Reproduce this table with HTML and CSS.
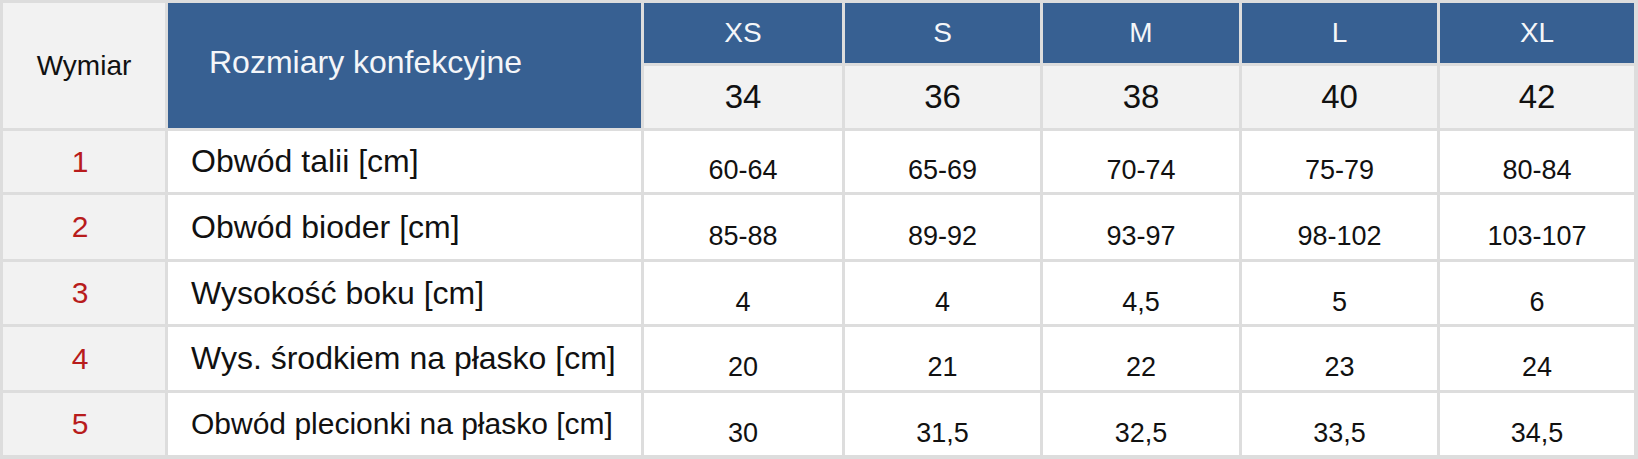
FILE: index.html
```html
<!DOCTYPE html>
<html lang="pl">
<head>
<meta charset="utf-8">
<title>Tabela rozmiarów</title>
<link rel="stylesheet" href="styles.css">
</head>
<body>
<div class="size-table">
  <div class="cell dim-head">Wymiar</div>
  <div class="cell blue title">Rozmiary konfekcyjne</div>
  <div class="cell blue size">XS</div>
  <div class="cell blue size">S</div>
  <div class="cell blue size">M</div>
  <div class="cell blue size">L</div>
  <div class="cell blue size">XL</div>
  <div class="cell eu">34</div>
  <div class="cell eu">36</div>
  <div class="cell eu">38</div>
  <div class="cell eu">40</div>
  <div class="cell eu">42</div>

  <div class="cell num">1</div>
  <div class="cell label">Obwód talii [cm]</div>
  <div class="cell val">60-64</div>
  <div class="cell val">65-69</div>
  <div class="cell val">70-74</div>
  <div class="cell val">75-79</div>
  <div class="cell val">80-84</div>

  <div class="cell num">2</div>
  <div class="cell label">Obwód bioder [cm]</div>
  <div class="cell val">85-88</div>
  <div class="cell val">89-92</div>
  <div class="cell val">93-97</div>
  <div class="cell val">98-102</div>
  <div class="cell val">103-107</div>

  <div class="cell num">3</div>
  <div class="cell label">Wysokość boku [cm]</div>
  <div class="cell val">4</div>
  <div class="cell val">4</div>
  <div class="cell val">4,5</div>
  <div class="cell val">5</div>
  <div class="cell val">6</div>

  <div class="cell num">4</div>
  <div class="cell label">Wys. środkiem na płasko [cm]</div>
  <div class="cell val">20</div>
  <div class="cell val">21</div>
  <div class="cell val">22</div>
  <div class="cell val">23</div>
  <div class="cell val">24</div>

  <div class="cell num">5</div>
  <div class="cell label label-small">Obwód plecionki na płasko [cm]</div>
  <div class="cell val">30</div>
  <div class="cell val">31,5</div>
  <div class="cell val">32,5</div>
  <div class="cell val">33,5</div>
  <div class="cell val">34,5</div>
</div>
</body>
</html>
```

FILE: styles.css
```css
html, body {
  margin: 0;
  padding: 0;
  background: #ffffff;
}

body {
  font-family: "Liberation Sans", Arial, sans-serif;
  color: #111111;
}

.size-table {
  display: grid;
  grid-template-columns: 162px 473px 198px 195px 196px 195px 194px;
  grid-template-rows: 60px 62px 61px 64px 62px 63px 62px;
  gap: 3px;
  padding: 3px 4px 4px 3px;
  background: #dddddd;
  width: 1638px;
  height: 459px;
  box-sizing: border-box;
}

.cell {
  display: flex;
  align-items: center;
  justify-content: center;
  background: #ffffff;
}

.dim-head {
  grid-row: 1 / span 2;
  background: #f2f2f2;
  font-size: 28px;
}

.blue {
  background: #376092;
  color: #f4f6f9;
}

.title {
  grid-row: 1 / span 2;
  justify-content: flex-start;
  padding: 0 0 6px 41px;
  font-size: 32px;
}

.size {
  font-size: 28px;
}

.eu {
  background: #f2f2f2;
  font-size: 33px;
}

.num {
  background: #f2f2f2;
  color: #b81c1c;
  font-size: 30px;
  padding-right: 8px;
}

.label {
  justify-content: flex-start;
  padding-left: 23px;
  font-size: 32px;
}

.label-small {
  font-size: 30px;
}

.val {
  font-size: 27px;
  padding-top: 18px;
}
```
